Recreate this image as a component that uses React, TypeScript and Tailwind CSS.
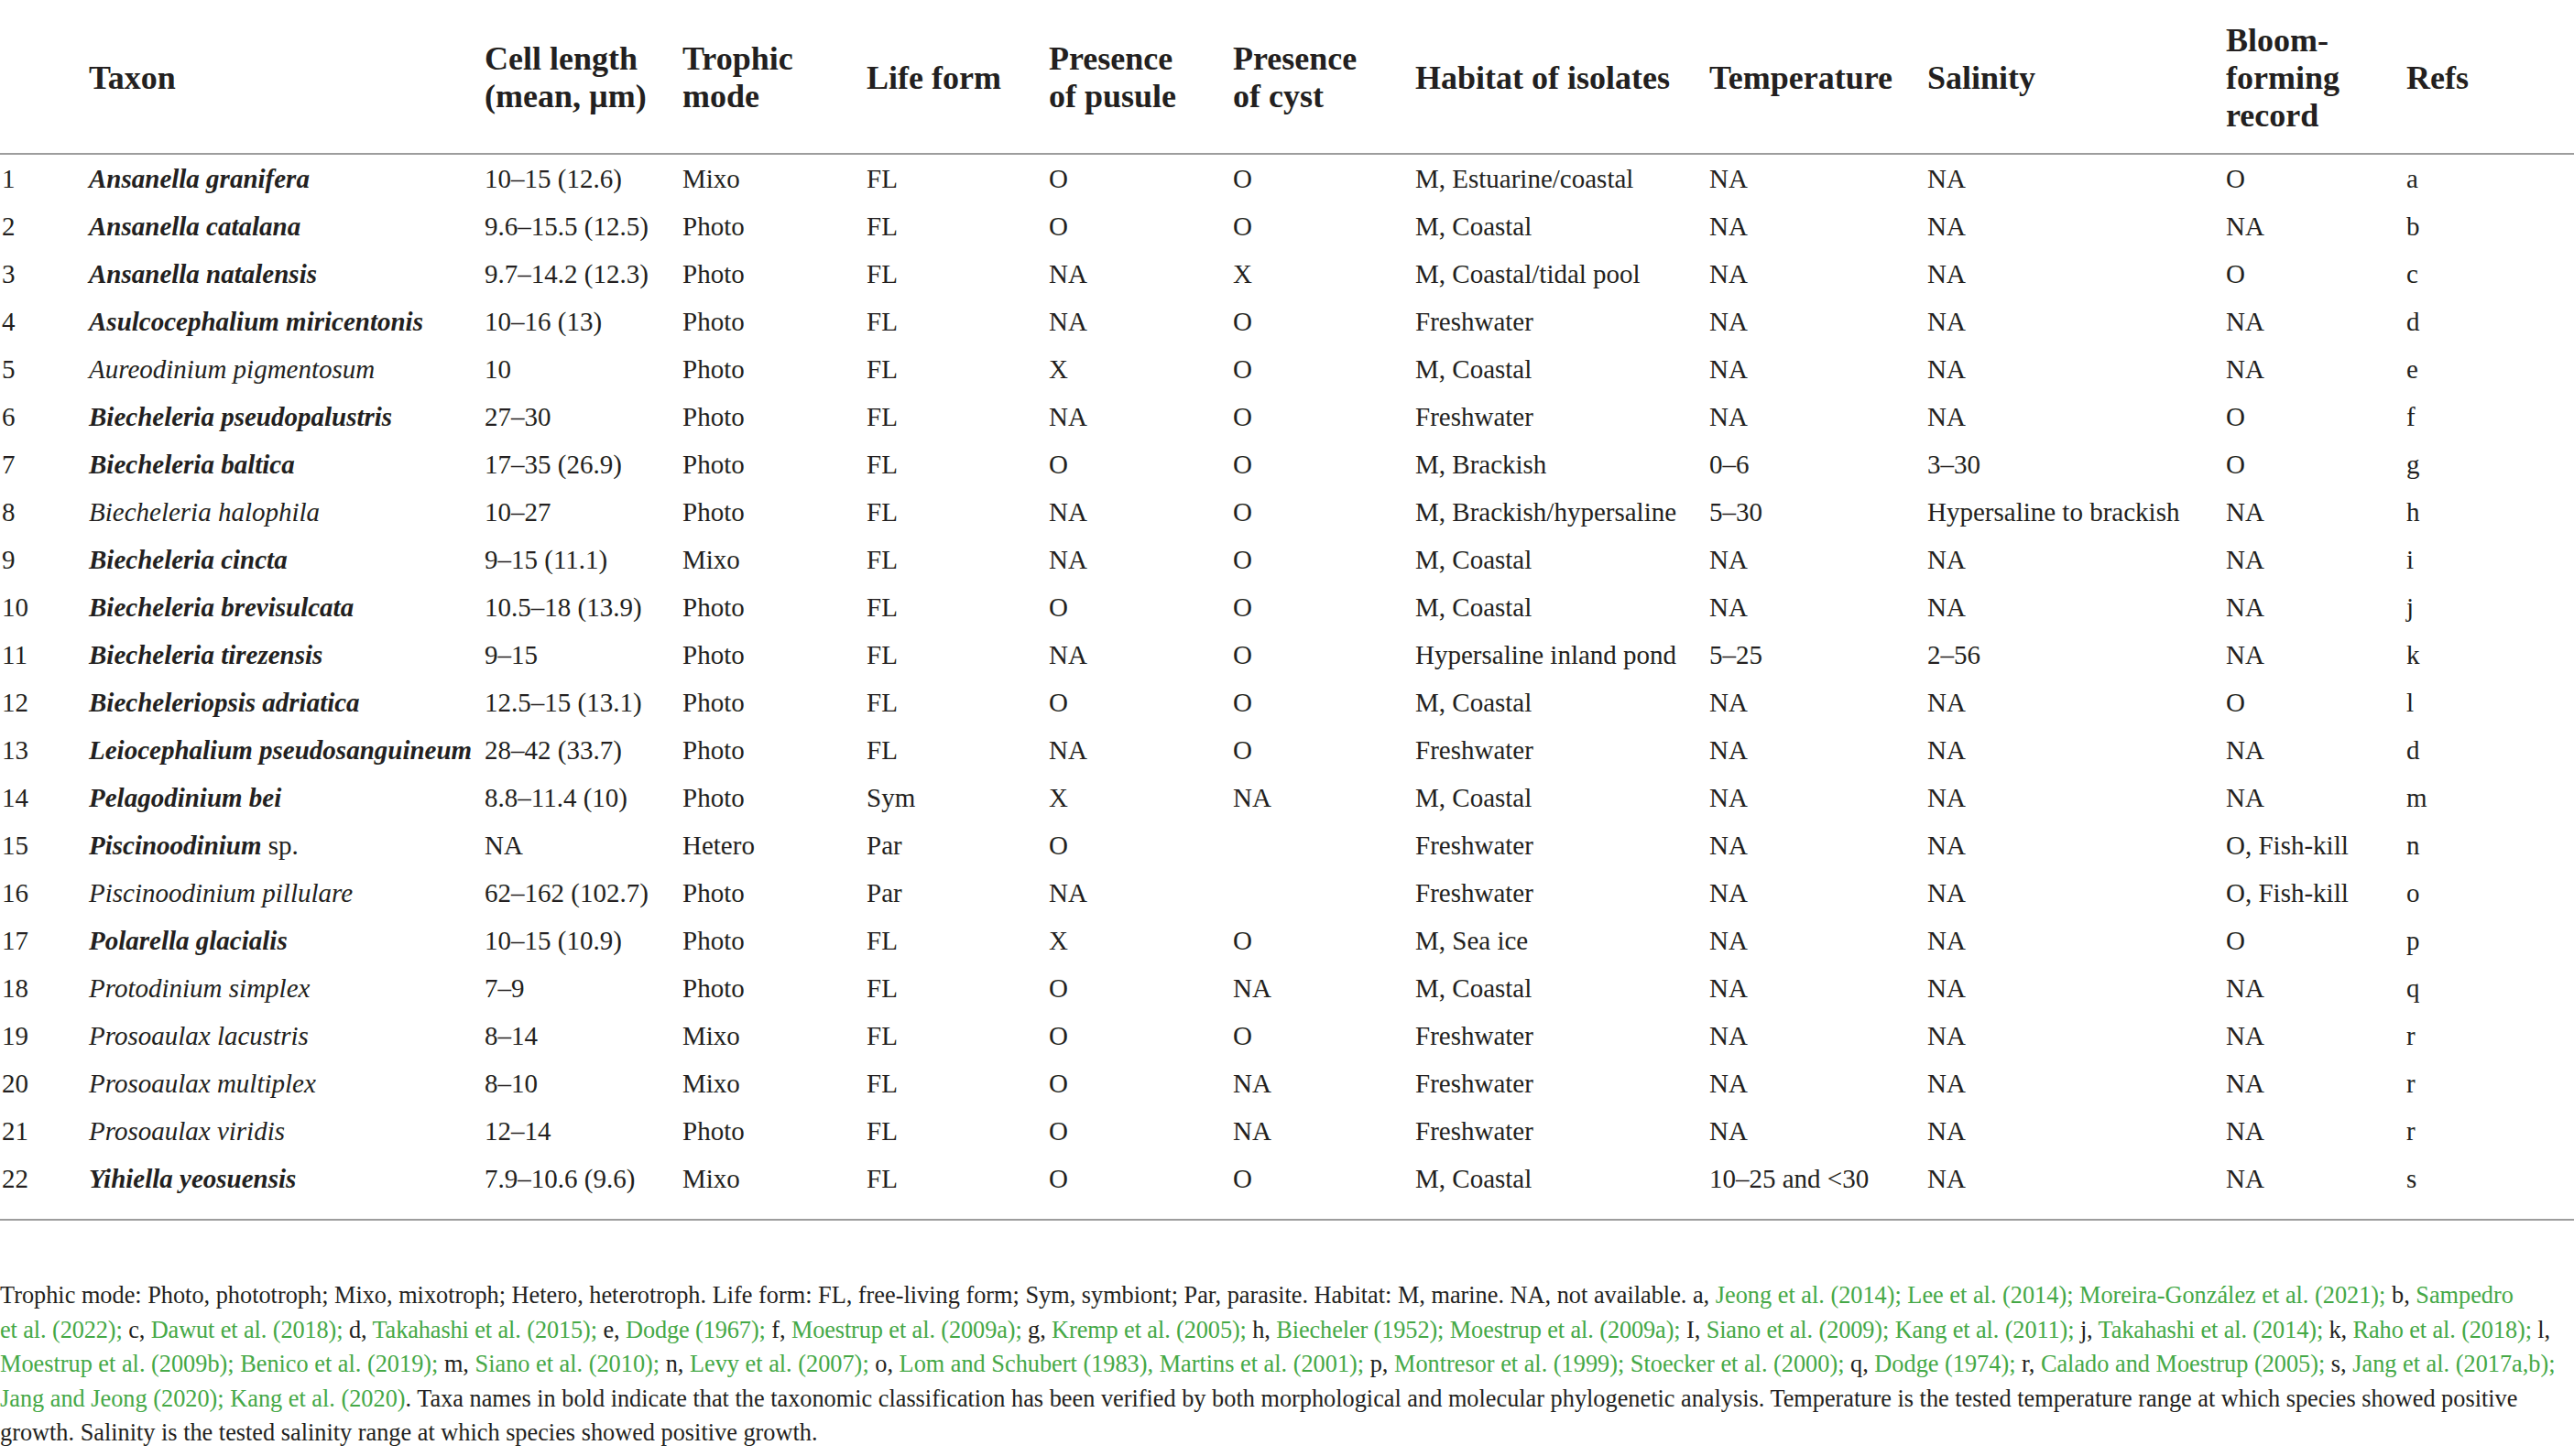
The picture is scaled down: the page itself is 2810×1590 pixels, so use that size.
import React from "react";

type Row = {
  n: number;
  name: string;
  suffix?: string;
  bold: boolean;
  cells: string[];
};

const rows: Row[] = [
  { n: 1, name: "Ansanella granifera", bold: true, cells: ["10–15 (12.6)", "Mixo", "FL", "O", "O", "M, Estuarine/coastal", "NA", "NA", "O", "a"] },
  { n: 2, name: "Ansanella catalana", bold: true, cells: ["9.6–15.5 (12.5)", "Photo", "FL", "O", "O", "M, Coastal", "NA", "NA", "NA", "b"] },
  { n: 3, name: "Ansanella natalensis", bold: true, cells: ["9.7–14.2 (12.3)", "Photo", "FL", "NA", "X", "M, Coastal/tidal pool", "NA", "NA", "O", "c"] },
  { n: 4, name: "Asulcocephalium miricentonis", bold: true, cells: ["10–16 (13)", "Photo", "FL", "NA", "O", "Freshwater", "NA", "NA", "NA", "d"] },
  { n: 5, name: "Aureodinium pigmentosum", bold: false, cells: ["10", "Photo", "FL", "X", "O", "M, Coastal", "NA", "NA", "NA", "e"] },
  { n: 6, name: "Biecheleria pseudopalustris", bold: true, cells: ["27–30", "Photo", "FL", "NA", "O", "Freshwater", "NA", "NA", "O", "f"] },
  { n: 7, name: "Biecheleria baltica", bold: true, cells: ["17–35 (26.9)", "Photo", "FL", "O", "O", "M, Brackish", "0–6", "3–30", "O", "g"] },
  { n: 8, name: "Biecheleria halophila", bold: false, cells: ["10–27", "Photo", "FL", "NA", "O", "M, Brackish/hypersaline", "5–30", "Hypersaline to brackish", "NA", "h"] },
  { n: 9, name: "Biecheleria cincta", bold: true, cells: ["9–15 (11.1)", "Mixo", "FL", "NA", "O", "M, Coastal", "NA", "NA", "NA", "i"] },
  { n: 10, name: "Biecheleria brevisulcata", bold: true, cells: ["10.5–18 (13.9)", "Photo", "FL", "O", "O", "M, Coastal", "NA", "NA", "NA", "j"] },
  { n: 11, name: "Biecheleria tirezensis", bold: true, cells: ["9–15", "Photo", "FL", "NA", "O", "Hypersaline inland pond", "5–25", "2–56", "NA", "k"] },
  { n: 12, name: "Biecheleriopsis adriatica", bold: true, cells: ["12.5–15 (13.1)", "Photo", "FL", "O", "O", "M, Coastal", "NA", "NA", "O", "l"] },
  { n: 13, name: "Leiocephalium pseudosanguineum", bold: true, cells: ["28–42 (33.7)", "Photo", "FL", "NA", "O", "Freshwater", "NA", "NA", "NA", "d"] },
  { n: 14, name: "Pelagodinium bei", bold: true, cells: ["8.8–11.4 (10)", "Photo", "Sym", "X", "NA", "M, Coastal", "NA", "NA", "NA", "m"] },
  { n: 15, name: "Piscinoodinium", suffix: " sp.", bold: true, cells: ["NA", "Hetero", "Par", "O", "", "Freshwater", "NA", "NA", "O, Fish-kill", "n"] },
  { n: 16, name: "Piscinoodinium pillulare", bold: false, cells: ["62–162 (102.7)", "Photo", "Par", "NA", "", "Freshwater", "NA", "NA", "O, Fish-kill", "o"] },
  { n: 17, name: "Polarella glacialis", bold: true, cells: ["10–15 (10.9)", "Photo", "FL", "X", "O", "M, Sea ice", "NA", "NA", "O", "p"] },
  { n: 18, name: "Protodinium simplex", bold: false, cells: ["7–9", "Photo", "FL", "O", "NA", "M, Coastal", "NA", "NA", "NA", "q"] },
  { n: 19, name: "Prosoaulax lacustris", bold: false, cells: ["8–14", "Mixo", "FL", "O", "O", "Freshwater", "NA", "NA", "NA", "r"] },
  { n: 20, name: "Prosoaulax multiplex", bold: false, cells: ["8–10", "Mixo", "FL", "O", "NA", "Freshwater", "NA", "NA", "NA", "r"] },
  { n: 21, name: "Prosoaulax viridis", bold: false, cells: ["12–14", "Photo", "FL", "O", "NA", "Freshwater", "NA", "NA", "NA", "r"] },
  { n: 22, name: "Yihiella yeosuensis", bold: true, cells: ["7.9–10.6 (9.6)", "Mixo", "FL", "O", "O", "M, Coastal", "10–25 and <30", "NA", "NA", "s"] },
];

const headers: string[][] = [
  [""],
  ["Taxon"],
  ["Cell length", "(mean, µm)"],
  ["Trophic", "mode"],
  ["Life form"],
  ["Presence", "of pusule"],
  ["Presence", "of cyst"],
  ["Habitat of isolates"],
  ["Temperature"],
  ["Salinity"],
  ["Bloom-", "forming", "record"],
  ["Refs"],
];

const grid =
  "grid grid-cols-[95px_432px_216px_201px_199px_201px_199px_321px_238px_326px_197px_1fr] pl-[2px]";

const G = ({ children }: { children: React.ReactNode }) => (
  <span className="text-[#45a846]">{children}</span>
);

export default function App() {
  return (
    <div className="w-[2810px] h-[1590px] bg-white text-[#231f20] font-['Liberation_Serif',serif] overflow-hidden">
      <div className={`${grid} h-[169px] items-center border-b-2 border-[#9d9d9d]`}>
        {headers.map((h, i) => (
          <div key={i} className="text-[36px] leading-[41px] font-bold pt-[3px]">
            {h.map((line, j) => (
              <div key={j} className="whitespace-nowrap">
                {line}
              </div>
            ))}
          </div>
        ))}
      </div>
      <div className="pb-[18px] border-b-2 border-[#9d9d9d]">
        {rows.map((r) => (
          <div key={r.n} className={`${grid} h-[52px] items-center text-[29px] leading-[33px]`}>
            <div>{r.n}</div>
            <div className="whitespace-nowrap">
              <span className={`italic ${r.bold ? "font-bold" : ""}`}>{r.name}</span>
              {r.suffix && <span>{r.suffix}</span>}
            </div>
            {r.cells.map((c, i) => (
              <div key={i} className="whitespace-nowrap">
                {c}
              </div>
            ))}
          </div>
        ))}
      </div>
      <div className="pt-[63px] text-[26.3px] leading-[37.6px]">
        <div className="whitespace-nowrap">
          Trophic mode: Photo, phototroph; Mixo, mixotroph; Hetero, heterotroph. Life form: FL, free-living form; Sym, symbiont; Par, parasite. Habitat: M, marine. NA, not available. a,{" "}
          <G>Jeong et al. (2014); Lee et al. (2014); Moreira-González et al. (2021);</G> b, <G>Sampedro</G>
        </div>
        <div className="whitespace-nowrap tracking-[-0.1px]">
          <G>et al. (2022);</G> c, <G>Dawut et al. (2018);</G> d, <G>Takahashi et al. (2015);</G> e, <G>Dodge (1967);</G> f,{" "}
          <G>Moestrup et al. (2009a);</G> g, <G>Kremp et al. (2005);</G> h, <G>Biecheler (1952); Moestrup et al. (2009a);</G> I,{" "}
          <G>Siano et al. (2009); Kang et al. (2011);</G> j, <G>Takahashi et al. (2014);</G> k, <G>Raho et al. (2018);</G> l,
        </div>
        <div className="whitespace-nowrap">
          <G>Moestrup et al. (2009b); Benico et al. (2019);</G> m, <G>Siano et al. (2010);</G> n, <G>Levy et al. (2007);</G> o,{" "}
          <G>Lom and Schubert (1983), Martins et al. (2001);</G> p, <G>Montresor et al. (1999); Stoecker et al. (2000);</G> q,{" "}
          <G>Dodge (1974);</G> r, <G>Calado and Moestrup (2005);</G> s, <G>Jang et al. (2017a,b);</G>
        </div>
        <div className="whitespace-nowrap">
          <G>Jang and Jeong (2020); Kang et al. (2020)</G>. Taxa names in bold indicate that the taxonomic classification has been verified by both morphological and molecular phylogenetic analysis. Temperature is the tested temperature range at which species showed positive
        </div>
        <div className="whitespace-nowrap">
          growth. Salinity is the tested salinity range at which species showed positive growth.
        </div>
      </div>
    </div>
  );
}
